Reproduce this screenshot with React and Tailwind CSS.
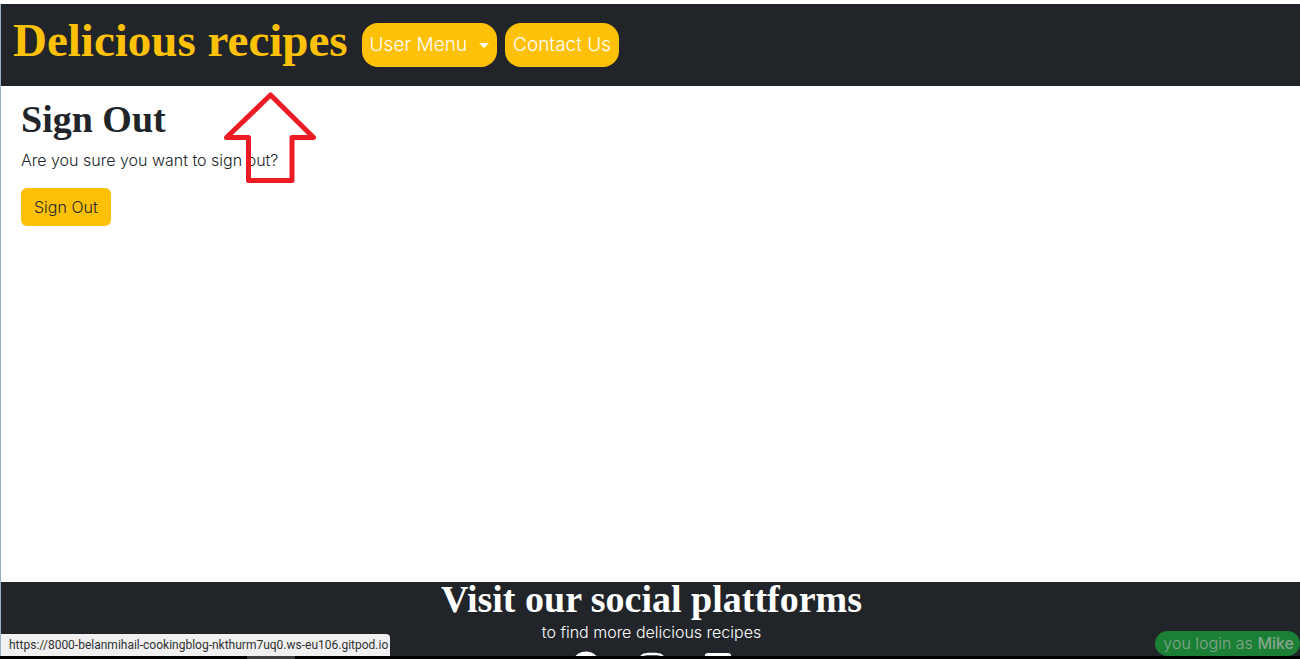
import { FaFacebook, FaInstagram, FaYoutubeSquare } from "react-icons/fa";

function SiteHeader() {
  return (
    <header className="flex h-[82px] shrink-0 items-start bg-[#212529] pl-3 pt-[19px]">
      <a
        href="#home"
        className="mr-[14px] whitespace-nowrap font-['Liberation_Serif',serif] text-[47px] font-bold leading-[34px] text-[#ffc107]"
      >
        Delicious recipes
      </a>
      <nav className="flex gap-2" aria-label="Main">
        <button
          type="button"
          className="flex h-11 items-center gap-3 whitespace-nowrap rounded-2xl bg-[#ffc107] px-2 text-[19px] font-light text-white"
        >
          User Menu
          <svg width="10" height="5" viewBox="0 0 10 5" aria-hidden="true">
            <path d="M0 0H10L5 5Z" fill="currentColor" />
          </svg>
        </button>
        <a
          href="#contact"
          className="flex h-11 items-center whitespace-nowrap rounded-2xl bg-[#ffc107] px-2 text-[19px] font-light text-white"
        >
          Contact Us
        </a>
      </nav>
    </header>
  );
}

function SignOut() {
  return (
    <main className="relative flex-1 px-5 pt-3">
      <h1 className="font-['Liberation_Serif',serif] text-[38px] font-bold leading-[42px]">
        Sign Out
      </h1>
      <p className="mt-1.5 font-light leading-7">Are you sure you want to sign out?</p>
      <form className="mt-3.5" onSubmit={(event) => event.preventDefault()}>
        <button
          type="submit"
          className="h-[38px] rounded-md bg-[#ffc107] px-[13px] font-light"
        >
          Sign Out
        </button>
      </form>
      <svg
        className="absolute left-[222px] top-1.5 h-[92px] w-[93px]"
        viewBox="0 0 93 92"
        fill="none"
        aria-hidden="true"
      >
        <path
          d="M47.5 3L90.5 45.5H69V88.5H25.5V45.5H3.5Z"
          stroke="#ed1c24"
          strokeWidth="5"
          strokeLinejoin="round"
        />
      </svg>
    </main>
  );
}

function SiteFooter() {
  return (
    <footer className="relative h-[74px] shrink-0 bg-[#212529] pl-0.5 text-center text-white">
      <h2 className="font-['Liberation_Serif',serif] text-[38px] font-bold leading-[34px]">
        Visit our social plattforms
      </h2>
      <p className="mt-1 font-light leading-6">to find more delicious recipes</p>
      <div className="mt-[7px] flex justify-center gap-9 text-[30px]">
        <a href="#facebook" aria-label="Facebook">
          <FaFacebook />
        </a>
        <a href="#instagram" aria-label="Instagram">
          <FaInstagram />
        </a>
        <a href="#youtube" aria-label="YouTube">
          <FaYoutubeSquare />
        </a>
      </div>
      <p className="absolute bottom-0 left-0 h-[22px] whitespace-nowrap rounded-tr bg-[#f0f0f0] pl-2 pr-0.5 font-['Roboto',sans-serif] text-xs leading-[22px] text-[#303030]">
        https://8000-belanmihail-cookingblog-nkthurm7uq0.ws-eu106.gitpod.io
      </p>
      <p className="absolute bottom-0 right-0 h-[25px] whitespace-nowrap rounded-full bg-[#1b8036] pl-2 pr-1.5 font-light leading-[25px] text-[#86a58e]">
        you login as <strong className="font-medium">Mike</strong>
      </p>
    </footer>
  );
}

export default function App() {
  return (
    <div className="flex h-screen flex-col overflow-hidden bg-white pt-1 font-['Inter',sans-serif] text-base text-[#212529]">
      <div className="flex min-h-0 flex-1 flex-col border-l border-[#9aafc4]">
        <SiteHeader />
        <SignOut />
        <SiteFooter />
      </div>
      <div className="relative flex h-[3px] shrink-0 bg-black pl-[247px]">
        <div className="w-12 bg-[#3c3c3c]" />
      </div>
    </div>
  );
}
